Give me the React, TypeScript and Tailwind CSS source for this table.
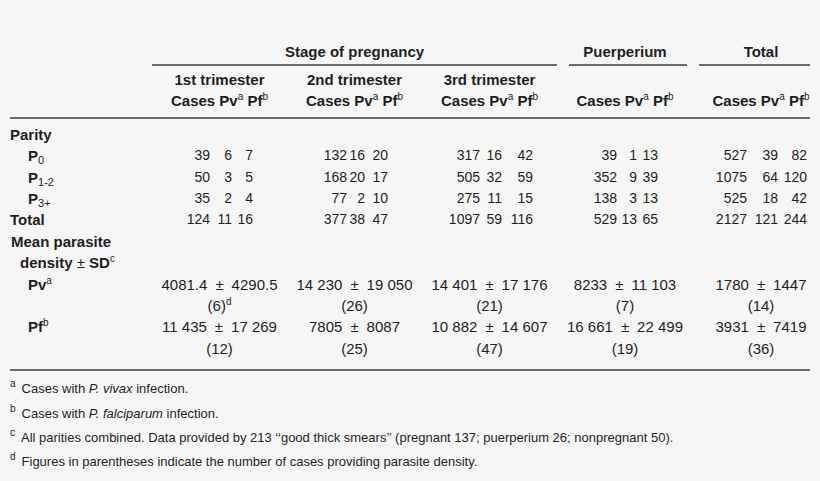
const GRID = "grid grid-cols-[142px_135px_135px_135px_136px_117px]";

const subCols = [
  ["w-[58px]", "w-[22px]", "w-[21px]"],
  ["w-[60px]", "w-[18px]", "w-[23px]"],
  ["w-[58px]", "w-[22px]", "w-[31px]"],
  ["w-[60px]", "w-[20px]", "w-[21px]"],
  ["w-[54px]", "w-[31px]", "w-[29px]"],
];

const parityRows = [
  { label: "P", sub: "0", data: [[39, 6, 7], [132, 16, 20], [317, 16, 42], [39, 1, 13], [527, 39, 82]] },
  { label: "P", sub: "1-2", data: [[50, 3, 5], [168, 20, 17], [505, 32, 59], [352, 9, 39], [1075, 64, 120]] },
  { label: "P", sub: "3+", data: [[35, 2, 4], [77, 2, 10], [275, 11, 15], [138, 3, 13], [525, 18, 42]] },
];

const totalRow = [[124, 11, 16], [377, 38, 47], [1097, 59, 116], [529, 13, 65], [2127, 121, 244]];

const densityRows = [
  {
    label: "Pv",
    sup: "a",
    data: [
      ["4081.4", "4290.5", "(6)", "d"],
      ["14 230", "19 050", "(26)"],
      ["14 401", "17 176", "(21)"],
      ["8233", "11 103", "(7)"],
      ["1780", "1447", "(14)"],
    ],
  },
  {
    label: "Pf",
    sup: "b",
    data: [
      ["11 435", "17 269", "(12)"],
      ["7805", "8087", "(25)"],
      ["10 882", "14 607", "(47)"],
      ["16 661", "22 499", "(19)"],
      ["3931", "7419", "(36)"],
    ],
  },
];

function Sup({ children }: { children: React.ReactNode }) {
  return <sup className="relative -top-[6px] align-baseline text-[10px] font-normal">{children}</sup>;
}

function CasesHead() {
  return (
    <span>
      Cases Pv<Sup>a</Sup> Pf<Sup>b</Sup>
    </span>
  );
}

function Rule({ className = "" }: { className?: string }) {
  return <div className={`h-[2px] bg-[#6a6a6a] ${className}`} />;
}

function Triple({ values, col }: { values: number[]; col: number }) {
  return (
    <div className="flex text-[14px]">
      {values.map((v, i) => (
        <span key={i} className={`${subCols[col][i]} text-right`}>
          {v}
        </span>
      ))}
    </div>
  );
}

export default function App() {
  return (
    <div
      className="h-[481px] w-[820px] overflow-hidden bg-[#f6f6f6] pl-[10px] pt-[41px] text-[15px] text-[#1e1e1e]"
      style={{ fontFamily: '"Liberation Sans", Arial, sans-serif' }}
    >
      <div className="w-[800px]">
        {/* group headings */}
        <div className={`${GRID} font-bold leading-[21px]`}>
          <div />
          <div className="col-span-3 flex flex-col">
            <div className="h-[21px] text-center">Stage of pregnancy</div>
            <Rule className="mt-[2px]" />
          </div>
          <div className="flex flex-col">
            <div className="h-[21px] text-center">Puerperium</div>
            <Rule className="ml-[12px] mr-[6px] mt-[2px]" />
          </div>
          <div className="flex flex-col">
            <div className="h-[21px] pl-[19px] text-center">Total</div>
            <Rule className="ml-[6px] mt-[2px]" />
          </div>
        </div>

        {/* sub headings */}
        <div className={`${GRID} mt-[3px] items-end font-bold leading-[21.4px]`}>
          <div />
          <div className="text-center">
            1st trimester
            <br />
            <CasesHead />
          </div>
          <div className="text-center">
            2nd trimester
            <br />
            <CasesHead />
          </div>
          <div className="text-center">
            3rd trimester
            <br />
            <CasesHead />
          </div>
          <div className="text-center">
            <CasesHead />
          </div>
          <div className="pl-[19px] text-center">
            <CasesHead />
          </div>
        </div>
        <Rule className="mt-[5px]" />

        {/* body */}
        <div className="mt-[5px] leading-[21.4px]">
          <div className="font-bold">Parity</div>
          {parityRows.map((row) => (
            <div key={row.sub} className={GRID}>
              <div className="pl-[18px] font-bold">
                {row.label}
                <sub className="relative top-[3px] align-baseline text-[11px] font-normal">{row.sub}</sub>
              </div>
              {row.data.map((vals, i) => (
                <Triple key={i} values={vals} col={i} />
              ))}
            </div>
          ))}
          <div className={GRID}>
            <div className="font-bold">Total</div>
            {totalRow.map((vals, i) => (
              <Triple key={i} values={vals} col={i} />
            ))}
          </div>
          <div className="pl-[1px] font-bold">Mean parasite</div>
          <div className="pl-[10px] font-bold">
            density <span className="font-normal">±</span> SD<Sup>c</Sup>
          </div>
          {densityRows.map((row) => (
            <div key={row.label} className={GRID}>
              <div className="pl-[18px] font-bold">
                {row.label}
                <Sup>{row.sup}</Sup>
              </div>
              {row.data.map((d, i) => (
                <div key={i} className={`text-center ${i === 4 ? "pl-[19px]" : ""}`}>
                  <div className="whitespace-nowrap">
                    {d[0]}
                    <span className="mx-[8px]">±</span>
                    {d[1]}
                  </div>
                  <div>
                    {d[2]}
                    {d[3] && <Sup>{d[3]}</Sup>}
                  </div>
                </div>
              ))}
            </div>
          ))}
        </div>
        <Rule className="mt-[10px]" />

        {/* footnotes */}
        <div className="mt-[6px] text-[13px] leading-[24.3px]">
          <div>
            <Sup>a</Sup>
            <span className="ml-[6px]">
              Cases with <i>P. vivax</i> infection.
            </span>
          </div>
          <div>
            <Sup>b</Sup>
            <span className="ml-[6px]">
              Cases with <i>P. falciparum</i> infection.
            </span>
          </div>
          <div>
            <Sup>c</Sup>
            <span className="ml-[6px]">
              All parities combined. Data provided by 213 ‘‘good thick smears’’ (pregnant 137; puerperium 26; nonpregnant 50).
            </span>
          </div>
          <div>
            <Sup>d</Sup>
            <span className="ml-[6px]">Figures in parentheses indicate the number of cases providing parasite density.</span>
          </div>
        </div>
      </div>
    </div>
  );
}
